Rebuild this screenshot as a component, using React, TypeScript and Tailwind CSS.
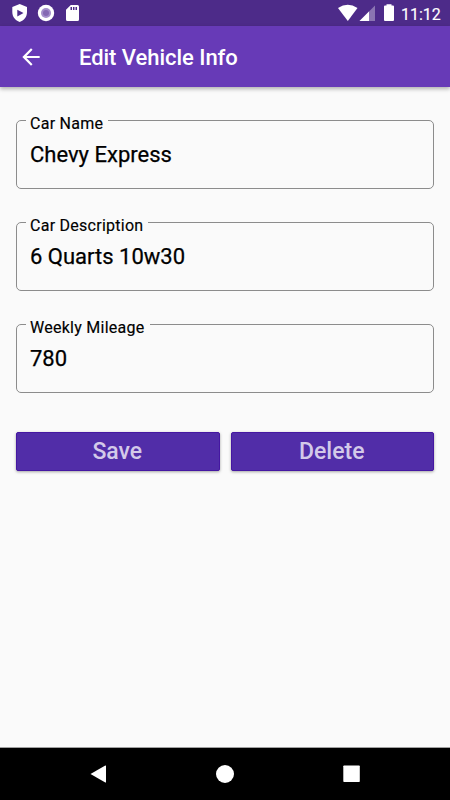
import React, { useState } from "react";

const initialFields = [
    { label: "Car Name", value: "Chevy Express" },
    { label: "Car Description", value: "6 Quarts 10w30" },
    { label: "Weekly Mileage", value: "780" },
];

export default function App() {
    const [fields, setFields] = useState(initialFields);

    const updateField = (index: number, value: string) => {
        setFields(fields.map((field, i) => (i === index ? { ...field, value } : field)));
    };

    return (
        <div className="h-screen w-full flex flex-col overflow-hidden bg-[#fafafa] text-black font-['Roboto',sans-serif]">
            <StatusBar />

            {/* App bar */}
            <header className="h-[61px] shrink-0 flex items-center bg-[#673ab7] text-white pl-[18px] shadow-[0_2px_4px_rgba(0,0,0,0.3)]">
                <button aria-label="Back" className="w-[26px] h-[26px]">
                    <svg viewBox="0 0 24 24" className="w-[26px] h-[26px]" fill="currentColor">
                        <path d="M20 11H7.83l5.59-5.59L12 4l-8 8 8 8 1.41-1.41L7.83 13H20v-2z" />
                    </svg>
                </button>
                <h1 className="ml-[35px] pt-[2px] text-[22px] leading-7 font-medium tracking-[-0.04px]">Edit Vehicle Info</h1>
            </header>

            <main className="flex-1 px-4 pt-[33px]">
                <div className="flex flex-col gap-[33px]">
                    {fields.map((field, i) => (
                        <OutlinedField
                            key={field.label}
                            label={field.label}
                            value={field.value}
                            onChange={(value) => updateField(i, value)}
                        />
                    ))}
                </div>
                <div className="mt-[39px] grid grid-cols-2 gap-[11px]">
                    <RaisedButton label="Save" />
                    <RaisedButton label="Delete" />
                </div>
            </main>

            <NavigationBar />
        </div>
    );
}

function OutlinedField({ label, value, onChange }: { label: string, value: string, onChange: (value: string) => void }) {
    return (
        <label className="relative block h-[69px] rounded-[5px] border border-[#8c8c8c] px-[13px] pt-[20px]">
            <span className="absolute -top-[8px] left-[9px] bg-[#fafafa] pl-[4px] pr-[5px] text-[16px] leading-[22px] tracking-[0.26px] whitespace-nowrap [-webkit-text-stroke:0.15px]">{label}</span>
            <input
                value={value}
                onChange={(e) => onChange(e.target.value)}
                className="block w-full h-[28px] bg-transparent outline-none text-[22px] leading-7 [-webkit-text-stroke:0.25px]"
            />
        </label>
    );
}

function RaisedButton({ label }: { label: string }) {
    return (
        <button className="h-[39px] pt-px pr-px rounded-[2px] bg-[#512da8] border border-[#4517a2] text-[#d3c9e9] text-[23px] leading-7 font-medium shadow-[0_1px_3px_rgba(0,0,0,0.35)]">
            {label}
        </button>
    );
}

function StatusBar() {
    return (
        <div className="h-[26px] shrink-0 flex items-center justify-between bg-[#4d2b89] text-white">
            <svg viewBox="0 0 90 26" className="w-[90px] h-[26px]" fill="currentColor">
                <path fillRule="evenodd" d="M19.700 4 L27 7 V12 C27 17 24 20.500 19.700 22 C15.500 20.500 12.300 17 12.300 12 V7Z M17.300 9.700 V16.500 L23.500 13.100Z" />
                <circle cx="46" cy="13" r="8.200" />
                <circle cx="46" cy="13" r="5" fill="#a48ecb" />
                <circle cx="46" cy="13" r="3" fill="#8468b3" />
                <path fillRule="evenodd" d="M70.800 5 H77.500 Q79 5 79 6.500 V19.500 Q79 21 77.500 21 H67.500 Q66 21 66 19.500 V9.800Z M70.500 7 V10 H72 V7Z M73 7 V10 H74.500 V7Z M75.500 7 V10 H77 V7Z" />
            </svg>
            <div className="flex items-center">
                <svg viewBox="0 0 62 26" className="w-[62px] h-[26px]" fill="currentColor">
                    <path d="M0 8 Q9.700 1.500 19.500 8 L9.800 21Z" />
                    <path d="M37 5.500 V21 H21.500Z" fillOpacity="0.35" />
                    <path d="M31 11.500 V21 H21.500Z" />
                    <path d="M47 5.500 H48.500 V4.300 H53.500 V5.500 H55 Q56 5.500 56 6.500 V20 Q56 21 55 21 H47 Q46 21 46 20 V6.500 Q46 5.500 47 5.500Z" />
                </svg>
                <span className="w-[50px] -mr-px text-[16px] leading-5 pt-[3px] ml-px [-webkit-text-stroke:0.15px]">11:12</span>
            </div>
        </div>
    );
}

function NavigationBar() {
    return (
        <nav className="h-[53px] shrink-0 border-t border-[#a0a0a0] bg-black text-white">
            <svg viewBox="0 0 450 52" className="w-full h-[52px]" fill="currentColor">
                <path d="M90.500 26 L105.300 17.500 Q106 17.200 106 18 V34 Q106 34.800 105.300 34.500Z" />
                <circle cx="225" cy="26" r="9" />
                <rect x="343.300" y="17.500" width="16.500" height="16.500" rx="0.800" />
            </svg>
        </nav>
    );
}
